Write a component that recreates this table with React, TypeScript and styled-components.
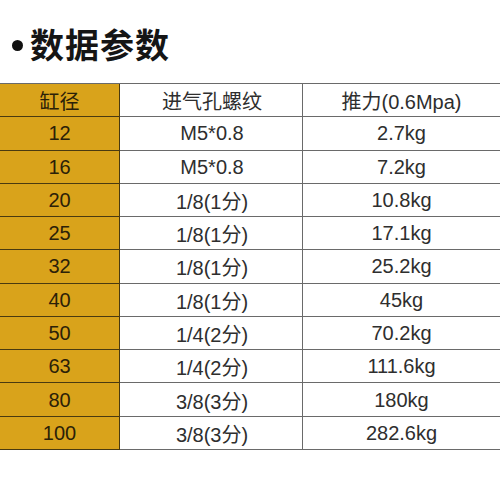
import React from "react";
import styled, { createGlobalStyle } from "styled-components";

const Global = createGlobalStyle`
  html, body { margin: 0; padding: 0; background: #fff; }
  body { font-family: "Liberation Sans", "Noto Sans CJK SC", sans-serif; }
`;

const Page = styled.div`
  width: 500px;
  height: 500px;
  overflow: hidden;
  background: #fff;
  display: flex;
  flex-direction: column;
`;

const TitleBar = styled.div`
  height: 83px;
  display: flex;
  align-items: center;
  padding-left: 12px;
  gap: 7px;
  box-sizing: border-box;
  padding-top: 4px;
`;

const Dot = styled.span`
  width: 11px;
  height: 11px;
  border-radius: 50%;
  background: #111;
  margin-top: 4px;
`;

const Title = styled.h1`
  margin: 0;
  font-family: "Noto Sans CJK SC", sans-serif;
  font-weight: 700;
  font-size: 34px;
  letter-spacing: 1px;
  color: #151515;
  line-height: 1;
`;

const Table = styled.div`
  display: grid;
  grid-template-columns: 120px 183px 1fr;
  grid-auto-rows: 33.27px;
  border-top: 1px solid #6a6a6a;
  width: 500px;
`;

const Cell = styled.div<{ $gold?: boolean }>`
  display: flex;
  align-items: center;
  justify-content: center;
  box-sizing: border-box;
  padding-top: 1px;
  border-bottom: 1px solid ${(p) => (p.$gold ? "#4a3a10" : "#6a6a6a")};
  border-right: ${(p) => (p.$gold ? "1px solid #4a3a10" : "none")};
  background: ${(p) => (p.$gold ? "#d9a31b" : "#fff")};
  color: ${(p) => (p.$gold ? "#2b2108" : "#2e2e2e")};
  font-size: 20px;
  font-family: "Liberation Sans", "Noto Sans CJK SC", sans-serif;
`;

const MidCell = styled(Cell)`
  border-right: 1px solid #6a6a6a;
  padding-left: 2px;
`;

const rows: [string, string, string][] = [
  ["12", "M5*0.8", "2.7kg"],
  ["16", "M5*0.8", "7.2kg"],
  ["20", "1/8(1分)", "10.8kg"],
  ["25", "1/8(1分)", "17.1kg"],
  ["32", "1/8(1分)", "25.2kg"],
  ["40", "1/8(1分)", "45kg"],
  ["50", "1/4(2分)", "70.2kg"],
  ["63", "1/4(2分)", "111.6kg"],
  ["80", "3/8(3分)", "180kg"],
  ["100", "3/8(3分)", "282.6kg"],
];

export default function App() {
  return (
    <Page>
      <Global />
      <TitleBar>
        <Dot />
        <Title>数据参数</Title>
      </TitleBar>
      <Table>
        <Cell $gold>缸径</Cell>
        <MidCell>进气孔螺纹</MidCell>
        <Cell>推力(0.6Mpa)</Cell>
        {rows.map(([a, b, c]) => (
          <React.Fragment key={a}>
            <Cell $gold>{a}</Cell>
            <MidCell>{b}</MidCell>
            <Cell>{c}</Cell>
          </React.Fragment>
        ))}
      </Table>
    </Page>
  );
}
